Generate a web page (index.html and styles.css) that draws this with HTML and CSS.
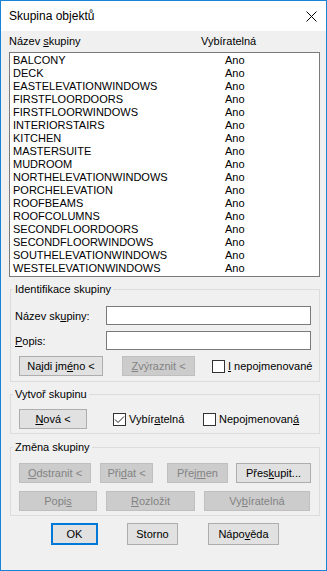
FILE: index.html
```html
<!DOCTYPE html>
<html lang="cs">
<head>
    <meta charset="UTF-8">
    <title>Skupina objektů</title>
    <link rel="stylesheet" href="styles.css">
</head>
<body>
<div class="dialog">
    <!-- Titulkový pruh -->
    <div class="titlebar">
        <span class="title">Skupina objektů</span>
        <svg class="close" width="11" height="11" viewBox="0 0 11 11">
            <path d="M0.5 0.5 L10.5 10.5 M10.5 0.5 L0.5 10.5" stroke="#000" stroke-width="1" fill="none"/>
        </svg>
    </div>

    <div class="content">
        <!-- Seznam skupin -->
        <div class="list-head">
            <span class="col-name">Název <u>s</u>kupiny</span>
            <span>Vybíratelná</span>
        </div>
        <div class="list">
            <div class="row"><span>BALCONY</span><span>Ano</span></div>
            <div class="row"><span>DECK</span><span>Ano</span></div>
            <div class="row"><span>EASTELEVATIONWINDOWS</span><span>Ano</span></div>
            <div class="row"><span>FIRSTFLOORDOORS</span><span>Ano</span></div>
            <div class="row"><span>FIRSTFLOORWINDOWS</span><span>Ano</span></div>
            <div class="row"><span>INTERIORSTAIRS</span><span>Ano</span></div>
            <div class="row"><span>KITCHEN</span><span>Ano</span></div>
            <div class="row"><span>MASTERSUITE</span><span>Ano</span></div>
            <div class="row"><span>MUDROOM</span><span>Ano</span></div>
            <div class="row"><span>NORTHELEVATIONWINDOWS</span><span>Ano</span></div>
            <div class="row"><span>PORCHELEVATION</span><span>Ano</span></div>
            <div class="row"><span>ROOFBEAMS</span><span>Ano</span></div>
            <div class="row"><span>ROOFCOLUMNS</span><span>Ano</span></div>
            <div class="row"><span>SECONDFLOORDOORS</span><span>Ano</span></div>
            <div class="row"><span>SECONDFLOORWINDOWS</span><span>Ano</span></div>
            <div class="row"><span>SOUTHELEVATIONWINDOWS</span><span>Ano</span></div>
            <div class="row"><span>WESTELEVATIONWINDOWS</span><span>Ano</span></div>
        </div>

        <!-- Identifikace skupiny -->
        <fieldset class="group group-ident">
            <legend>Identifikace skupiny</legend>
            <div class="field">
                <span class="field-label">Název sk<u>u</u>piny:</span>
                <span class="input"></span>
            </div>
            <div class="field field-next">
                <span class="field-label"><u>P</u>opis:</span>
                <span class="input"></span>
            </div>
            <div class="btn-row">
                <span class="btn w-najdi">Najdi jm<u>é</u>no &lt;</span>
                <span class="btn disabled w-zvyraznit"><u>Z</u>výraznit &lt;</span>
                <span class="check check-unnamed"><span class="box"></span><span><u>I</u> nepojmenované</span></span>
            </div>
        </fieldset>

        <!-- Vytvoř skupinu -->
        <fieldset class="group group-create">
            <legend>Vytvoř skupinu</legend>
            <div class="btn-row">
                <span class="btn w-nova"><u>N</u>ová &lt;</span>
                <span class="check check-sel">
                    <span class="box">
                        <svg width="11" height="11" viewBox="0 0 11 11">
                            <path d="M1 5.5 L4 8.5 L10 2.5" stroke="#222" stroke-width="1" fill="none"/>
                        </svg>
                    </span>
                    <span>Vybír<u>a</u>telná</span>
                </span>
                <span class="check"><span class="box"></span><span>Nepojmenovan<u>á</u></span></span>
            </div>
        </fieldset>

        <!-- Změna skupiny -->
        <fieldset class="group group-change">
            <legend>Změna skupiny</legend>
            <div class="btn-row">
                <span class="btn disabled w-odstranit"><u>O</u>dstranit &lt;</span>
                <span class="btn disabled w-pridat">Při<u>d</u>at &lt;</span>
                <span class="btn disabled w-prejmen">Přej<u>m</u>en</span>
                <span class="btn w-preskupit">Přes<u>k</u>upit...</span>
            </div>
            <div class="btn-row row-second">
                <span class="btn disabled w-popis">Popi<u>s</u></span>
                <span class="btn disabled w-rozlozit"><u>R</u>ozložit</span>
                <span class="btn disabled w-vyb">Vy<u>b</u>íratelná</span>
            </div>
        </fieldset>

        <!-- Tlačítka dialogu -->
        <div class="dialog-buttons">
            <span class="btn btn-default w-ok">OK</span>
            <span class="btn w-storno">Storno</span>
            <span class="btn w-help">Nápo<u>v</u>ěda</span>
        </div>
    </div>
</div>
</body>
</html>
```

FILE: styles.css
```css
body {
    margin: 0;
    font-family: "Liberation Sans", Arial, sans-serif;
    font-size: 11px;
    color: #000000;
}

/* Okno dialogu */
.dialog {
    width: 327px;
    height: 571px;
    box-sizing: border-box;
    border: 1px solid #1883d7;
    background-color: #f0f0f0;
}

.titlebar {
    height: 30px;
    background-color: #ffffff;
    display: flex;
    align-items: center;
    justify-content: space-between;
    padding: 0 9px 0 8px;
}

.title {
    font-size: 12px;
}

.content {
    padding: 4px 6px 0 8px;
}

/* Seznam */
.list-head {
    display: flex;
    height: 13px;
    line-height: 13px;
    margin-bottom: 4px;
}

.list-head .col-name {
    width: 192px;
}

.list {
    height: 225px;
    box-sizing: border-box;
    border: 1px solid #7a7a7a;
    background-color: #ffffff;
    padding: 1px 0 0 3px;
}

.row {
    display: grid;
    grid-template-columns: 212px auto;
    height: 13px;
    line-height: 13px;
}

/* Skupinové rámečky */
.group {
    margin: 6px 0 0 1px;
    padding: 10px 0 5px 0;
    border: 1px solid #dcdcdc;
    min-width: 0;
}

.group legend {
    padding: 0 2px;
    margin-left: 2px;
    line-height: 13px;
}

.group-create {
    padding: 8px 0 4px 0;
}

.group-change {
    margin-top: 7px;
    padding: 9px 0 4px 0;
}

.field {
    display: flex;
    align-items: center;
    height: 19px;
    padding-left: 4px;
}

.field-next {
    margin-top: 6px;
}

.field-label {
    width: 91px;
}

.input {
    width: 205px;
    height: 19px;
    box-sizing: border-box;
    border: 1px solid #7a7a7a;
    background-color: #ffffff;
}

/* Tlačítka */
.btn-row {
    display: flex;
    align-items: center;
    padding-left: 8px;
}

.group-ident .btn-row {
    margin-top: 6px;
}

.row-second {
    margin-top: 8px;
}

.btn {
    display: block;
    height: 20px;
    box-sizing: border-box;
    border: 1px solid #adadad;
    background-color: #e1e1e1;
    text-align: center;
    line-height: 18px;
    white-space: nowrap;
}

.btn.disabled {
    background-color: #cccccc;
    border-color: #bfbfbf;
    color: #838383;
}

.w-najdi { width: 84px; }
.w-zvyraznit { width: 73px; margin-left: 19px; }
.w-nova { width: 68px; }
.w-odstranit { width: 72px; }
.w-pridat { width: 53px; margin-left: 9px; }
.w-prejmen { width: 61px; margin-left: 14px; }
.w-preskupit { width: 75px; margin-left: 8px; }
.w-popis { width: 78px; }
.w-rozlozit { width: 89px; margin-left: 9px; }
.w-vyb { width: 106px; margin-left: 9px; }

/* Zaškrtávací pole */
.check {
    display: flex;
    align-items: center;
    line-height: 13px;
    white-space: nowrap;
}

.check-unnamed {
    margin-left: 17px;
}

.check-sel {
    width: 90px;
    margin-left: 26px;
}

.box {
    width: 13px;
    height: 13px;
    box-sizing: border-box;
    border: 1px solid #333333;
    background-color: #ffffff;
    margin-right: 3px;
    flex-shrink: 0;
}

.box svg {
    display: block;
}

/* Spodní tlačítka */
.dialog-buttons {
    display: flex;
    margin-top: 7px;
    padding-left: 42px;
}

.dialog-buttons .btn {
    height: 22px;
    line-height: 20px;
}

.dialog-buttons .btn-default {
    border: 2px solid #0078d7;
    line-height: 18px;
}

.w-ok { width: 47px; }
.w-storno { width: 51px; margin-left: 29px; }
.w-help { width: 71px; margin-left: 30px; }
```
